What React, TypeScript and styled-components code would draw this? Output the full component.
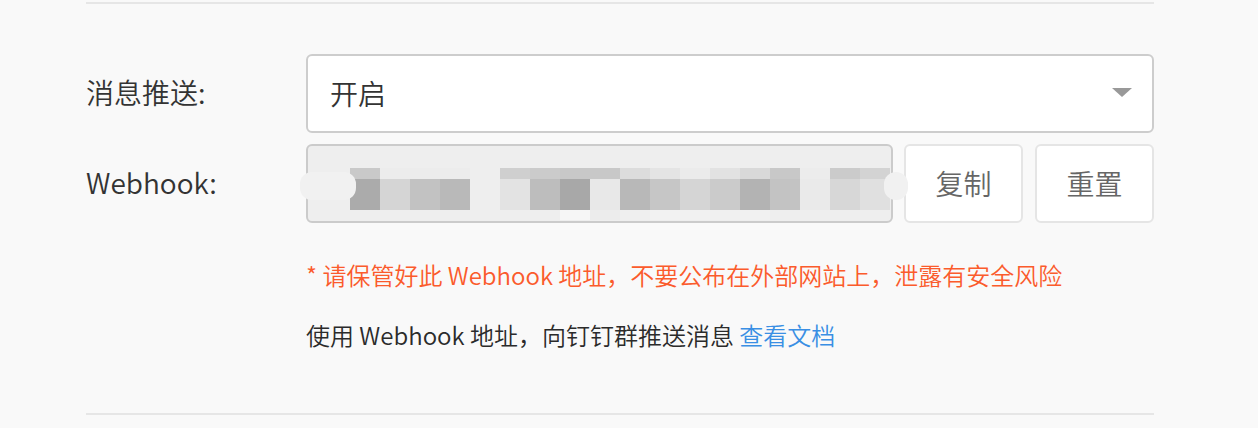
import React from "react";
import styled, { createGlobalStyle } from "styled-components";

const GlobalStyle = createGlobalStyle`
  html, body { margin: 0; padding: 0; background: #f9f9f9; }
  body { font-family: "Noto Sans CJK SC", "Noto Sans", sans-serif; color: #333; font-weight: 350; }
`;

const Page = styled.div`
  padding-top: 2px;
  padding-left: 86px;
  width: 1068px;
`;

const Section = styled.section`
  border-top: 2px solid #e6e6e6;
  border-bottom: 2px solid #e6e6e6;
  padding: 50px 0 60px;
`;

const FormRow = styled.div<{ $gap?: number }>`
  display: flex;
  align-items: center;
  height: 79px;
  margin-bottom: ${(p) => p.$gap ?? 0}px;
`;

const Label = styled.label`
  width: 220px;
  flex: none;
  font-size: 28px;
  color: #333;
  line-height: 40px;
  margin-top: -4px;
`;

const Control = styled.div`
  flex: 1;
  display: flex;
  height: 100%;
  gap: 11px;
`;

const SelectBox = styled.div`
  flex: 1;
  box-sizing: border-box;
  height: 79px;
  border: 2px solid #cdcdcd;
  border-radius: 6px;
  background: #fff;
  display: flex;
  align-items: center;
  justify-content: space-between;
  padding: 0 22px 2px 22px;
  font-size: 28px;
  color: #333;
`;

const Caret = styled.span`
  width: 0;
  height: 0;
  border-left: 10px solid transparent;
  border-right: 10px solid transparent;
  border-top: 9px solid #999;
  margin-right: -2px;
`;

const UrlField = styled.div`
  position: relative;
  width: 587px;
  flex: none;
  box-sizing: border-box;
  height: 79px;
  border: 2px solid #cbcbcb;
  border-radius: 6px;
  background: #eeeeee;
  padding: 22px 0 0 42px;
  display: flex;
  align-items: flex-start;
  overflow: visible;
`;

const Mosaic = styled.div`
  display: flex;
`;

const MosaicCol = styled.div`
  display: flex;
  flex-direction: column;
  width: 30px;
`;

const Cell = styled.div<{ $h: number }>`
  height: ${(p) => p.$h}px;
`;

const Smudge = styled.div<{ $left: number; $w: number }>`
  position: absolute;
  left: ${(p) => p.$left}px;
  top: 26px;
  width: ${(p) => p.$w}px;
  height: 28px;
  border-radius: 12px;
  background: #f1f1f1;
`;

const ButtonGroup = styled.div`
  display: flex;
  gap: 12px;
`;

const Button = styled.button`
  width: 119px;
  height: 79px;
  box-sizing: border-box;
  border: 2px solid #e5e5e5;
  border-radius: 6px;
  background: #fff;
  font-family: "Noto Sans CJK SC", "Noto Sans", sans-serif;
  font-weight: 350;
  font-size: 28px;
  color: #666;
  padding: 0 0 2px;
  cursor: pointer;
`;

const Hints = styled.div`
  margin-left: 220px;
  margin-top: 34px;
  display: flex;
  flex-direction: column;
  gap: 24px;
`;

const Hint = styled.p<{ $tone?: "warn" | "normal" }>`
  margin: 0;
  font-size: 24px;
  line-height: 36px;
  color: ${(p) => (p.$tone === "warn" ? "#fb5b2c" : "#2b2b2b")};
`;

const DocLink = styled.a`
  color: #3a8fe4;
  text-decoration: none;
`;

const top = ["#c9c9c9", "#ececec", "#ececec", "#ececec", "#eeeeee", "#cfcfcf", "#cbcbcb", "#c8c8c8", "#c8c8c8", "#dcdcdc", "#e4e4e4", "#ebebeb", "#e2e2e2", "#d9d9d9", "#c8c8c8", "#ececec", "#cbcbcb", "#d3d3d3"];
const mid = ["#ababab", "#d5d5d5", "#c2c2c2", "#b9b9b9", "#eeeeee", "#e3e3e3", "#bdbdbd", "#a8a8a8", "#e8e8e8", "#b8b8b8", "#c6c6c6", "#d5d5d5", "#cbcbcb", "#b3b3b3", "#c3c3c3", "#eaeaea", "#d7d7d7", "#e0e0e0"];
const low = ["#eeeeee", "#eeeeee", "#eeeeee", "#eeeeee", "#eeeeee", "#eeeeee", "#eeeeee", "#f6f6f6", "#ececec", "#efefef", "#f2f2f2", "#f1f1f1", "#f0f0f0", "#f1f1f1", "#eeeeee", "#eeeeee", "#eeeeee", "#eeeeee"];

export default function App() {
  return (
    <>
      <GlobalStyle />
      <Page>
        <Section>
          <FormRow $gap={11}>
            <Label>消息推送:</Label>
            <Control>
              <SelectBox>
                <span>开启</span>
                <Caret />
              </SelectBox>
            </Control>
          </FormRow>
          <FormRow>
            <Label>Webhook:</Label>
            <Control>
              <UrlField>
                <Smudge $left={-8} $w={56} />
                <Mosaic>
                  {mid.map((c, i) => (
                    <MosaicCol key={i}>
                      <Cell $h={11} style={{ background: top[i] }} />
                      <Cell $h={31} style={{ background: c }} />
                      <Cell $h={10} style={{ background: low[i] }} />
                    </MosaicCol>
                  ))}
                </Mosaic>
                <Smudge $left={576} $w={24} />
              </UrlField>
              <ButtonGroup>
                <Button>复制</Button>
                <Button>重置</Button>
              </ButtonGroup>
            </Control>
          </FormRow>
          <Hints>
            <Hint $tone="warn">* 请保管好此 Webhook 地址，不要公布在外部网站上，泄露有安全风险</Hint>
            <Hint>
              使用 Webhook 地址，向钉钉群推送消息 <DocLink href="#">查看文档</DocLink>
            </Hint>
          </Hints>
        </Section>
      </Page>
    </>
  );
}
